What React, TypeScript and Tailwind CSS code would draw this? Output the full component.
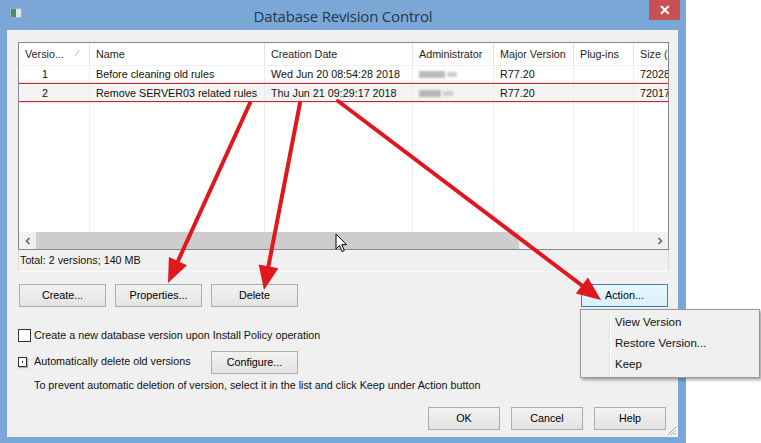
import React from 'react';

const columns = [
  { label: 'Versio...', w: 'w-[71px]' },
  { label: 'Name', w: 'w-[175px]' },
  { label: 'Creation Date', w: 'w-[148px]' },
  { label: 'Administrator', w: 'w-[81px]' },
  { label: 'Major Version', w: 'w-[80px]' },
  { label: 'Plug-ins', w: 'w-[60px]' },
  { label: 'Size (', w: 'w-[60px]' },
];

const rows = [
  ['1', 'Before cleaning old rules', 'Wed Jun 20 08:54:28 2018', '', 'R77.20', '', '72028'],
  ['2', 'Remove SERVER03 related rules', 'Thu Jun 21 09:29:17 2018', '', 'R77.20', '', '72017'],
];

const WinButton: React.FC<{ label: string; w?: string; focused?: boolean }> = ({ label, w = 'w-[87px]', focused }) => (
  <div
    className={
      focused
        ? `${w} h-[23px] shrink-0 border border-[#3c7fb1] bg-linear-to-b from-[#eaf6fd] to-[#d9f0fc] flex items-center justify-center text-black`
        : `${w} h-[23px] shrink-0 border border-[#acacac] bg-linear-to-b from-[#f2f2f2] to-[#e3e3e3] flex items-center justify-center text-black`
    }
  >
    {label}
  </div>
);

const Blur: React.FC<{ w: string }> = ({ w }) => (
  <div className="flex items-center gap-[2px] opacity-80">
    <div className={`${w} h-[7px] bg-[#a9a9a9] blur-[1.2px]`} />
    <div className="w-[10px] h-[5px] bg-[#c4c4c4] blur-[1.2px]" />
  </div>
);

export default function App() {
  return (
    <div className="relative w-[761px] h-[443px] overflow-hidden bg-white flex font-['Liberation_Sans',Arial,sans-serif] text-[10.75px] text-[#111]">
      {/* window frame */}
      <div className="w-[686px] h-full bg-[#7ba7d7] flex flex-col">
        {/* title bar */}
        <div className="h-[30px] flex items-start shrink-0">
          <div className="w-[37px] pl-[10px] pt-[8px]">
            <div className="w-[12px] h-[10px] flex border border-[#9fb0c0]">
              <div className="w-[5px] h-full bg-[#4d8a6a]" />
              <div className="flex-1 h-full bg-[#dfe6ec]" />
            </div>
          </div>
          <div className="flex-1 text-center pt-[5px] text-[15px] text-[#25364a] font-['Open_Sans',Arial,sans-serif] tracking-[-0.2px]">
            Database Revision Control
          </div>
          <div className="w-[37px] flex">
            <div className="w-[31px] h-[20px] bg-[#c75050] flex items-center justify-center text-white text-[14px] font-bold leading-none">
              ✕
            </div>
          </div>
        </div>

        {/* client area */}
        <div className="relative flex-1 ml-[7px] mr-[8px] mb-[6px] bg-[#f0f0f0] pt-[12px] pl-[11px] pr-[9px] flex flex-col">
          {/* list + status panel */}
          <div className="w-[651px] flex flex-col">
            <div className="relative h-[208px] border border-[#828790] bg-white flex flex-col overflow-hidden">
              {/* header */}
              <div className="h-[23px] flex shrink-0 border-b border-[#f0f0f0]">
                {columns.map((c, i) => (
                  <div
                    key={c.label}
                    className={`${c.w} shrink-0 h-full border-r border-[#e5e5e5] pl-[6px] flex items-center whitespace-nowrap overflow-hidden text-[#1e1e1e]`}
                  >
                    {c.label}
                    {i === 0 && <span className="ml-[13px] text-[9px] text-[#9a9a9a]">⁄</span>}
                  </div>
                ))}
              </div>
              {/* rows */}
              {rows.map((r, ri) => (
                <div
                  key={ri}
                  className={ri === 1 ? 'h-[18px] flex shrink-0 bg-[#f4f4f4]' : 'h-[18px] flex shrink-0 border-b border-[#f0f0f0]'}
                >
                  {r.map((cell, ci) => (
                    <div
                      key={ci}
                      className={
                        ci === 0
                          ? `${columns[ci].w} shrink-0 h-full border-r border-[#ededed] flex items-center justify-center pr-[18px]`
                          : `${columns[ci].w} shrink-0 h-full border-r border-[#ededed] pl-[6px] flex items-center whitespace-nowrap overflow-hidden`
                      }
                    >
                      {ci === 3 ? <Blur w={ri === 0 ? 'w-[26px]' : 'w-[22px]'} /> : cell}
                    </div>
                  ))}
                </div>
              ))}
              {/* empty area with column lines */}
              <div className="flex-1 flex">
                {columns.map((c) => (
                  <div key={c.label} className={`${c.w} shrink-0 h-full border-r border-[#ededed]`} />
                ))}
              </div>
              {/* horizontal scrollbar */}
              <div className="h-[17px] flex shrink-0 bg-[#f0f0f0]">
                <div className="w-[17px] flex items-center justify-center">
                  <svg width="6" height="8" viewBox="0 0 6 8">
                    <path d="M4.5 1 L1.5 4 L4.5 7" fill="none" stroke="#606060" strokeWidth="1.6" />
                  </svg>
                </div>
                <div className="w-[483px] h-full bg-[#cdcdcd]" />
                <div className="flex-1" />
                <div className="w-[17px] flex items-center justify-center">
                  <svg width="6" height="8" viewBox="0 0 6 8">
                    <path d="M1.5 1 L4.5 4 L1.5 7" fill="none" stroke="#606060" strokeWidth="1.6" />
                  </svg>
                </div>
              </div>
              {/* annotation highlight of row 2 */}
              <div className="absolute left-[-1px] right-[-1px] top-[40px] h-[19px] border-[1.5px] border-[#c8262b] rounded-[1px] shadow-[0_0_2px_rgba(200,38,43,0.5)]" />
            </div>
            <div className="h-[22px] flex items-center pl-[1px] border-x border-b border-[#dcdcdc] border-b-[#fbfbfb]">
              Total: 2 versions; 140 MB
            </div>
          </div>

          {/* action buttons */}
          <div className="mt-[12px] flex gap-[9px] pl-[1px] w-[651px]">
            <WinButton label="Create..." />
            <WinButton label="Properties..." />
            <WinButton label="Delete" />
            <div className="ml-auto mr-[1px]">
              <WinButton label="Action..." focused />
            </div>
          </div>

          {/* checkbox rows */}
          <div className="mt-[20px] h-[16px] flex items-center">
            <div className="w-[13px] h-[13px] border border-[#333] bg-white shrink-0" />
            <span className="ml-[3px]">Create a new database version upon Install Policy operation</span>
          </div>
          <div className="mt-[8px] h-[22px] flex items-center">
            <div className="w-[193px] flex items-center">
              <div className="w-[9px] h-[10px] border border-[#333] bg-white shrink-0 flex items-center justify-center shadow-[1px_1px_1px_rgba(0,0,0,0.25)]">
                <div className="w-[1px] h-[2px] bg-[#333]" />
              </div>
              <span className="ml-[7px] -mt-[2px]">Automatically delete old versions</span>
            </div>
            <WinButton label="Configure..." />
          </div>
          <div className="mt-[4px] h-[16px] flex items-center pl-[16px]">
            To prevent automatic deletion of version, select it in the list and click Keep under Action button
          </div>

          {/* dialog buttons */}
          <div className="mt-[14px] flex justify-end gap-[11px] w-[651px] pr-[3px]">
            <WinButton label="OK" w="w-[72px]" />
            <WinButton label="Cancel" w="w-[72px]" />
            <WinButton label="Help" w="w-[72px]" />
          </div>

          {/* size grip */}
          <svg className="absolute right-[1px] bottom-[1px]" width="11" height="11" viewBox="0 0 11 11">
            <path d="M10 2 L2 10 M10 5 L5 10 M10 8 L8 10" stroke="#a0a0a0" strokeWidth="1" />
            <path d="M11 3 L3 11 M11 6 L6 11 M11 9 L9 11" stroke="#ffffff" strokeWidth="1" />
          </svg>
        </div>
      </div>

      {/* context menu */}
      <div className="absolute left-[580px] top-[309px] w-[180px] h-[69px] bg-[#f0f0f0] border border-[#979797] shadow-[2px_2px_3px_rgba(0,0,0,0.35)] flex">
        <div className="w-[29px] shrink-0 border-r border-[#e2e2e2]" />
        <div className="w-[1px] bg-white" />
        <div className="flex-1 pt-[2px] pl-[4px] text-[11.5px] text-[#111]">
          <div className="h-[21px] flex items-center">View Version</div>
          <div className="h-[21px] flex items-center">Restore Version...</div>
          <div className="h-[21px] flex items-center">Keep</div>
        </div>
      </div>

      {/* mouse pointer */}
      <svg className="absolute left-[335px] top-[233px]" width="13" height="20" viewBox="0 0 13 20">
        <path d="M1 1 L1 16 L4.5 12.5 L7 18.5 L9.3 17.5 L6.8 11.7 L11.5 11.7 Z" fill="#ffffff" stroke="#000" strokeWidth="1" strokeLinejoin="round" />
      </svg>

      {/* red annotation arrows */}
      <svg className="absolute inset-0 pointer-events-none" width="761" height="443" viewBox="0 0 761 443">
        <g stroke="#e0181e" strokeWidth="4" strokeLinecap="round">
          <line x1="250" y1="103" x2="178" y2="261" />
          <line x1="300" y1="103" x2="268.5" y2="266" />
          <line x1="338" y1="101" x2="582" y2="285.5" />
        </g>
        <g fill="#e0181e">
          <polygon points="168,283 187,265.3 168.9,257" />
          <polygon points="264,290 278.4,268.3 258.7,264.5" />
          <polygon points="601,300 575.8,293.5 587.9,277.5" />
        </g>
      </svg>
    </div>
  );
}
